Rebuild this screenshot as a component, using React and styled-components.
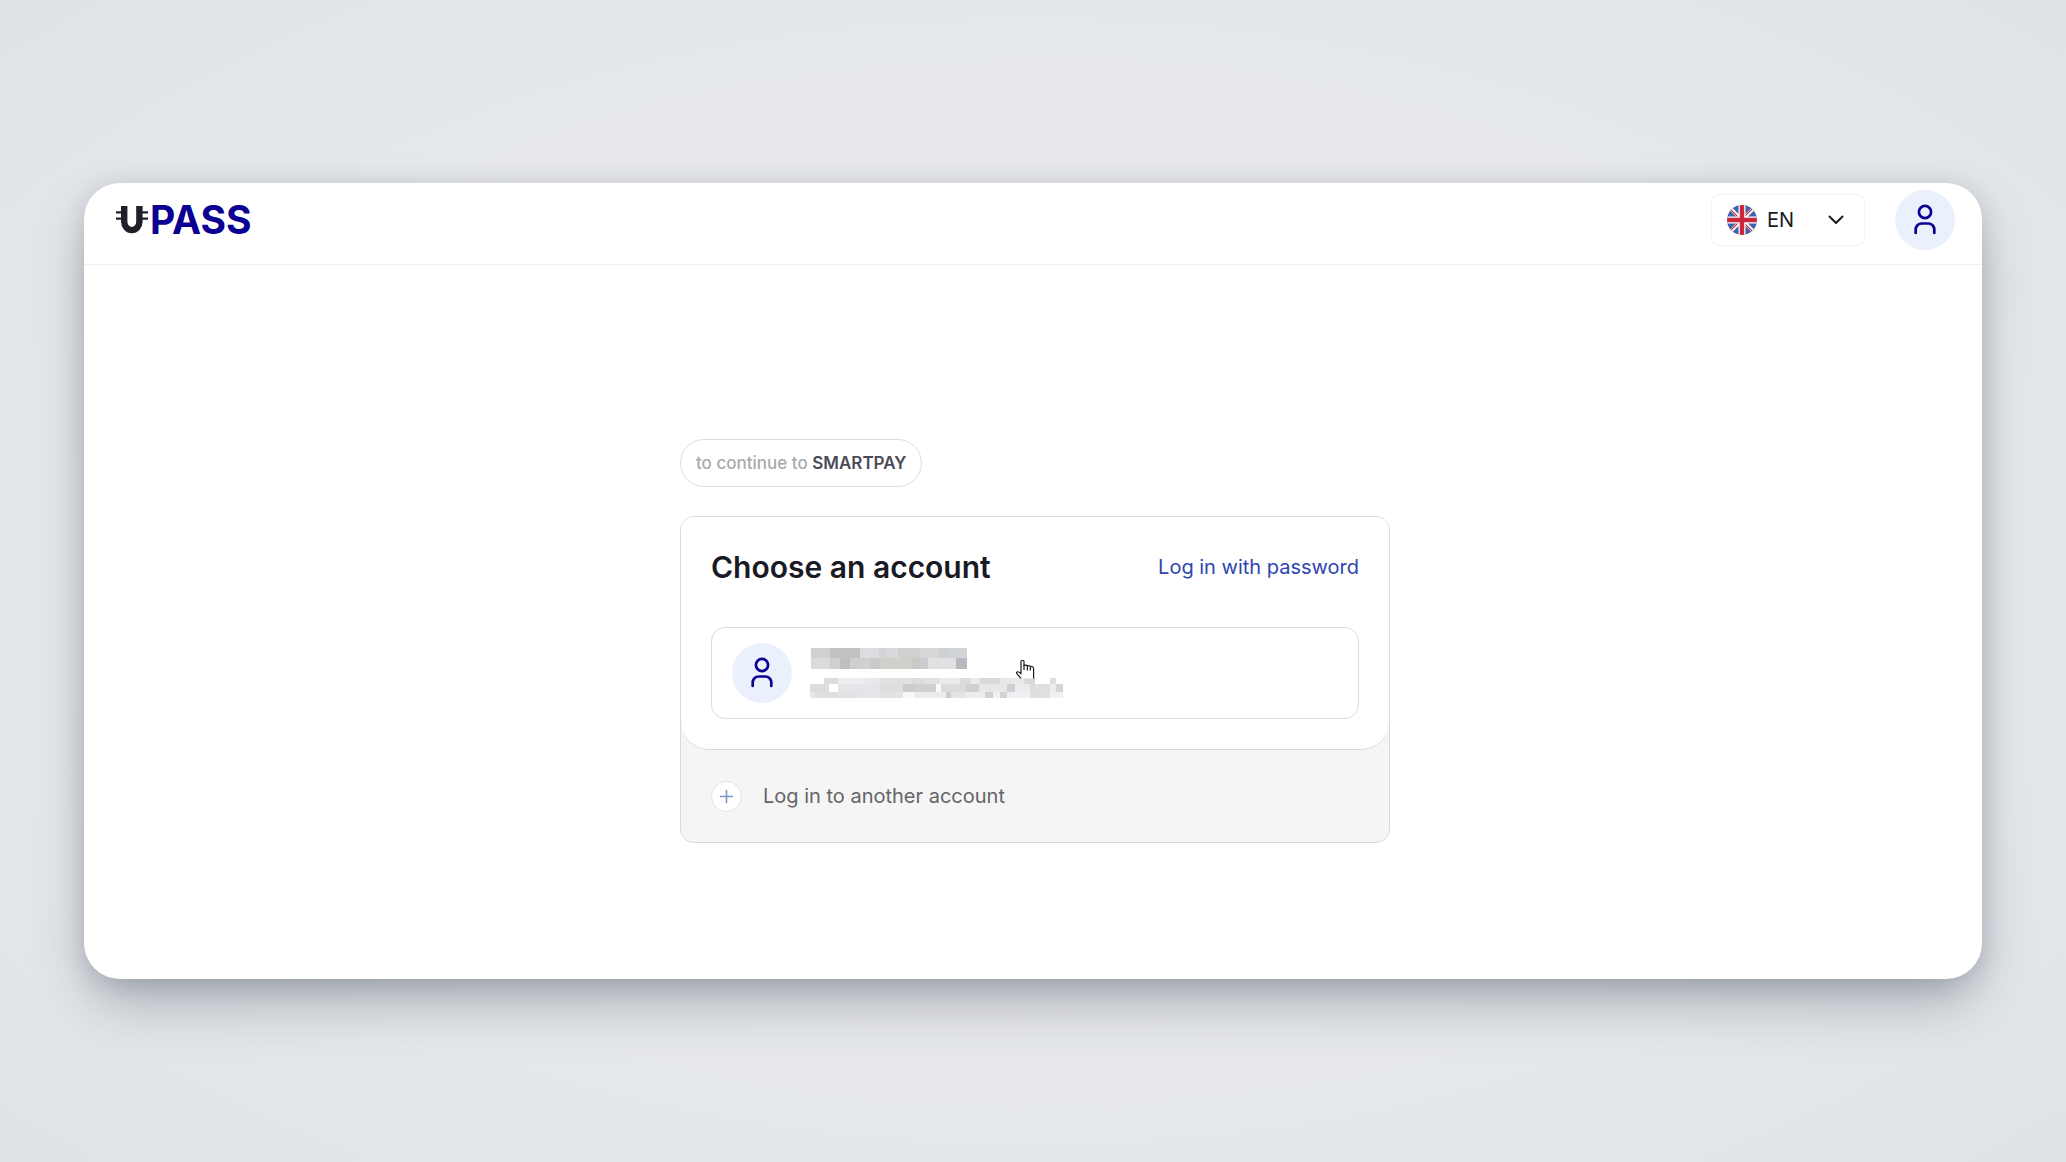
import React from 'react';
import styled, { createGlobalStyle } from 'styled-components';

const GlobalStyle = createGlobalStyle`
  * {
    box-sizing: border-box;
  }
  body {
    margin: 0;
    font-family: "Inter", "Liberation Sans", sans-serif;
    color: #1a1a24;
  }
`;

const Page = styled.div`
  min-height: 100vh;
  padding: 183px 84px;
  background:
    radial-gradient(ellipse at 50% 50%, #ececef 0%, #e8e9ec 50%, #e4e7ea 75%, #dee3e7 100%);
`;

const Window = styled.div`
  min-height: calc(100vh - 366px);
  border-radius: 36px;
  background-color: #fff;
  box-shadow:
    0 28px 56px -8px rgba(50, 58, 76, 0.36),
    0 4px 24px rgba(60, 68, 88, 0.18);
`;

const Header = styled.header`
  display: flex;
  align-items: center;
  justify-content: space-between;
  padding: 7px 27px 14px 32px;
  border-bottom: 1px solid #f0f0f2;
`;

const Logo = styled.a`
  display: flex;
  align-items: center;
  gap: 2px;
  font-size: 39px;
  line-height: 48px;
  font-weight: 700;
  color: #0b0091;
  text-decoration: none;
`;

const HeaderActions = styled.div`
  display: flex;
  align-items: center;
  gap: 30px;
`;

const LangButton = styled.button`
  display: flex;
  align-items: center;
  width: 154px;
  height: 52px;
  padding: 0 20px 0 15px;
  border: 1px solid #f3f3f5;
  border-radius: 8px;
  background-color: #fff;
  font-family: inherit;
  font-size: 20px;
  color: #1a1a24;
`;

const LangCode = styled.span`
  flex: 1;
  padding-left: 10px;
  text-align: left;
`;

const Avatar = styled.span`
  display: flex;
  align-items: center;
  justify-content: center;
  flex: none;
  width: 60px;
  height: 60px;
  border-radius: 50%;
  background-color: #ebf0fd;
`;

const AvatarButton = styled(Avatar)`
  padding: 0;
  border: none;
`;

const Main = styled.main`
  display: flex;
  flex-direction: column;
  align-items: flex-start;
  width: 714px;
  max-width: 100%;
  margin: 0 auto;
  padding: 174px 0 0 4px;
`;

const Pill = styled.p`
  margin: 0 0 29px;
  padding: 0 15px;
  border: 1px solid #dedee0;
  border-radius: 24px;
  font-size: 17px;
  line-height: 46px;
  font-weight: 500;
  color: #a9a9ae;

  strong {
    font-weight: 600;
    color: #4b4b58;
  }
`;

const Card = styled.section`
  width: 100%;
  border: 1px solid #d9d9dc;
  border-radius: 14px;
  background-color: #f5f5f5;
  overflow: hidden;
`;

const CardBody = styled.div`
  padding: 30px;
  border-bottom: 1px solid #dadadc;
  border-radius: 0 0 28px 28px;
  background-color: #fff;
`;

const CardHead = styled.div`
  display: flex;
  align-items: center;
  justify-content: space-between;
  margin-bottom: 40px;
`;

const Title = styled.h1`
  margin: 0;
  font-size: 30px;
  line-height: 40px;
  font-weight: 600;
`;

const PasswordLink = styled.a`
  font-size: 20px;
  line-height: 40px;
  color: #2e45b0;
  text-decoration: none;
`;

const Account = styled.button`
  position: relative;
  display: flex;
  align-items: center;
  gap: 18px;
  width: 100%;
  height: 92px;
  padding: 0 20px;
  border: 1px solid #dadadc;
  border-radius: 14px;
  background-color: #fff;
  cursor: pointer;
`;

const Pointer = styled.svg`
  position: absolute;
  left: 303px;
  top: 31px;
`;

const OtherAccount = styled.button`
  display: flex;
  align-items: center;
  gap: 21px;
  width: 100%;
  height: 92px;
  padding: 0 30px;
  border: none;
  background: none;
  font-family: inherit;
  font-size: 20px;
  color: #646468;
`;

const PlusCircle = styled.span`
  display: flex;
  align-items: center;
  justify-content: center;
  width: 31px;
  height: 31px;
  border: 1px solid #e4e4e8;
  border-radius: 50%;
  background-color: #fff;
`;

// masked user data: [x, width, color] for every line of blocks
const maskedName = [
  {
    y: 0,
    h: 10,
    cells: [
      [1, 19, '#cfd0d1'], [20, 30, '#c3c2c1'], [50, 19, '#dcdddf'], [69, 8, '#d4d5d8'],
      [77, 11, '#d9dadb'], [88, 22, '#d0d0cf'], [110, 18, '#d7d8da'], [128, 11, '#cfd0d2'],
      [139, 9, '#cfd3dc'], [148, 9, '#d4d5d5'],
    ],
  },
  {
    y: 10,
    h: 11,
    cells: [
      [1, 19, '#dadcdc'], [20, 10, '#cfcfd0'], [30, 10, '#c1bfbd'], [40, 10, '#cfcfcf'],
      [50, 10, '#d0d1ce'], [60, 10, '#cacacd'], [70, 32, '#cfcfcb'], [102, 8, '#c9cac7'],
      [110, 8, '#cbccd0'], [118, 28, '#e1e1e2'], [146, 11, '#b8bac1'],
    ],
  },
];

const maskedMail = [
  {
    y: 30,
    h: 6,
    cells: [
      [14, 14, '#dddddf'], [28, 27, '#ededef'], [55, 15, '#e8e9ec'], [70, 32, '#e1e1e2'],
      [102, 13, '#dcdcdd'], [115, 15, '#e2e2e2'], [130, 20, '#e9eaeb'], [150, 11, '#dbdbdc'],
      [161, 9, '#ececed'], [170, 20, '#d9d9da'], [190, 24, '#e8e8ea'], [214, 11, '#d8d8da'],
      [240, 6, '#dedede'],
    ],
  },
  {
    y: 36,
    h: 8,
    cells: [
      [0, 19, '#dcdddd'], [19, 9, '#ffffff'], [28, 22, '#e5e6e7'], [50, 20, '#e4e5e9'],
      [70, 23, '#dededf'], [93, 14, '#cccdd0'], [107, 19, '#d1d1d2'], [126, 5, '#fafafa'],
      [131, 25, '#dcdcdd'], [156, 13, '#cfcfd0'], [169, 28, '#e8e8ea'], [197, 8, '#d0d0d2'],
      [205, 15, '#ebebed'], [220, 5, '#dcdcde'], [225, 15, '#dfdfe0'], [240, 6, '#ebecef'],
      [246, 7, '#d6d6d8'],
    ],
  },
  {
    y: 44,
    h: 6,
    cells: [
      [0, 5, '#e6e7e7'], [5, 23, '#dedfe0'], [28, 22, '#e2e3e4'], [50, 20, '#e5e5e9'],
      [70, 23, '#e3e3e5'], [93, 11, '#f8f8f9'], [104, 32, '#ececee'], [136, 5, '#cdcdcf'],
      [141, 15, '#e4e4e5'], [156, 19, '#ededee'], [175, 8, '#d1d1d3'], [183, 7, '#eff0f2'],
      [190, 7, '#d2d2d4'], [197, 23, '#eff0f3'], [220, 20, '#dfdfe0'], [240, 13, '#eff1f3'],
    ],
  },
];

function MaskedUser() {
  return (
    <svg width="253" height="50" viewBox="0 0 253 50" shapeRendering="crispEdges" role="img" aria-label="Hidden user">
      {[...maskedName, ...maskedMail].map((line) =>
        line.cells.map(([x, width, color]) => (
          <rect key={`${line.y}-${x}`} x={x} y={line.y} width={width} height={line.h} fill={color} />
        ))
      )}
    </svg>
  );
}

function UserIcon() {
  return (
    <svg width="24" height="32" viewBox="0 0 24 32" fill="none" stroke="#0b0091" strokeWidth="2.7" strokeLinecap="round">
      <circle cx="12" cy="8" r="6.1" />
      <path d="M2.7 29V25.5A6 6 0 0 1 8.7 19.5H15.3A6 6 0 0 1 21.3 25.5V29" />
    </svg>
  );
}

function LogoMark() {
  return (
    <svg width="32" height="28" viewBox="0 0 32 28" fill="none" stroke="#20202a">
      <path d="M8.2 0V15.5A7.6 8.6 0 0 0 23.4 15.5V0" strokeWidth="6.4" />
      <path d="M0 6.4H9M0 12.6H9M23 6.4H32M23 12.6H32" strokeWidth="2.2" />
    </svg>
  );
}

function Flag() {
  return (
    <svg width="30" height="30" viewBox="0 0 30 30">
      <clipPath id="flag">
        <circle cx="15" cy="15" r="15" />
      </clipPath>
      <g clipPath="url(#flag)">
        <rect width="30" height="30" fill="#3f62ae" />
        <path d="M0 0L30 30M30 0L0 30" stroke="#fff" strokeWidth="3.6" />
        <path d="M15 16L3 4M15 14L27 2M15 16L27 28M15 14L3 26" stroke="#cf3445" strokeWidth="1.2" />
        <path d="M15 0V30M0 15H30" stroke="#fff" strokeWidth="7" />
        <path d="M15 0V30M0 15H30" stroke="#cb2639" strokeWidth="4.4" />
      </g>
    </svg>
  );
}

function App() {
  return (
    <Page>
      <GlobalStyle />
      <Window>
        <Header>
          <Logo href="#" aria-label="UPASS">
            <LogoMark />
            PASS
          </Logo>
          <HeaderActions>
            <LangButton type="button">
              <Flag />
              <LangCode>EN</LangCode>
              <svg width="16" height="10" viewBox="0 0 16 10" fill="none" stroke="#1a1a24" strokeWidth="2" strokeLinecap="round" strokeLinejoin="round">
                <path d="M1.5 1.5L8 8L14.5 1.5" />
              </svg>
            </LangButton>
            <AvatarButton as="button" type="button" aria-label="Profile">
              <UserIcon />
            </AvatarButton>
          </HeaderActions>
        </Header>
        <Main>
          <Pill>
            to continue to <strong>SMARTPAY</strong>
          </Pill>
          <Card>
            <CardBody>
              <CardHead>
                <Title>Choose an account</Title>
                <PasswordLink href="#">Log in with password</PasswordLink>
              </CardHead>
              <Account type="button">
                <Avatar>
                  <UserIcon />
                </Avatar>
                <Pointer width="20" height="20" viewBox="0 0 20 20" fill="#fff" stroke="#1a1a24" strokeWidth="1.2" strokeLinejoin="round">
                  <path d="M6 19.5C5 18 3.6 16.6 2 14.8C1.2 13.8 1.4 13 2.4 12.8C3.6 12.6 4.8 13.4 6 14.8V2.6C6 0.8 9 0.8 9 2.6V6.4C10.6 5.8 12 6.2 12.4 7C13.6 6.4 15 6.8 15.4 7.6C17 7.2 18.6 7.8 18.6 9.4V19.5" />
                  <path d="M9 6V11M12.4 7V11.4M15.4 7.6V11.4" fill="none" />
                </Pointer>
                <MaskedUser />
              </Account>
            </CardBody>
            <OtherAccount type="button">
              <PlusCircle>
                <svg width="13" height="13" viewBox="0 0 13 13" stroke="#7f93cf" strokeWidth="1.6">
                  <path d="M6.5 0V13M0 6.5H13" />
                </svg>
              </PlusCircle>
              Log in to another account
            </OtherAccount>
          </Card>
        </Main>
      </Window>
    </Page>
  );
}

export default App;
